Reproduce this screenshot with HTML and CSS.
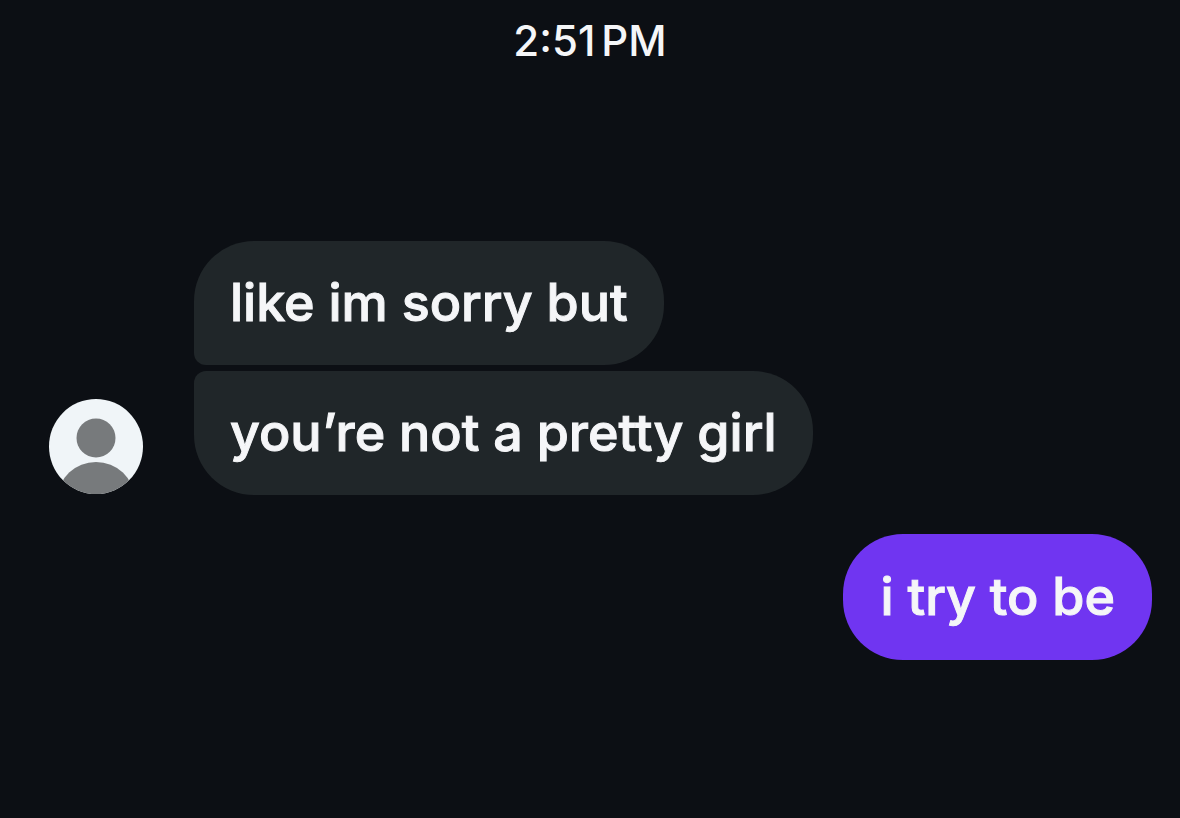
FILE: index.html
```html
<!DOCTYPE html>
<html lang="en">
<head>
  <meta charset="UTF-8" />
  <meta name="viewport" content="width=device-width, initial-scale=1" />
  <title>Chat</title>
  <link rel="stylesheet" href="styles.css">
</head>
<body>
  <main class="chat">
    <time class="timestamp" datetime="14:51"><span>2:51</span><span>PM</span></time>

    <div class="row incoming">
      <svg class="avatar" viewBox="0 0 94 96" role="img" aria-label="Profile picture">
        <defs>
          <clipPath id="avatar-clip"><ellipse cx="47" cy="47.5" rx="47" ry="47.5" /></clipPath>
        </defs>
        <g clip-path="url(#avatar-clip)">
          <rect width="94" height="96" fill="#f0f5f8" />
          <circle cx="47" cy="39" r="19.5" fill="#777a7c" />
          <ellipse cx="47" cy="99" rx="38" ry="36" fill="#777a7c" />
        </g>
      </svg>
      <div class="bubbles">
        <p class="bubble first">like im sorry but</p>
        <p class="bubble last">you’re not a pretty girl</p>
      </div>
    </div>

    <div class="row outgoing">
      <p class="bubble sent">i try to be</p>
    </div>
  </main>
</body>
</html>
```

FILE: styles.css
```css
body {
  margin: 0;
  background: #0c0f14;
  color: #f5f6f8;
  font-family: Inter, "Liberation Sans", sans-serif;
}

.chat {
  display: flex;
  flex-direction: column;
  padding: 16px 28px 48px;
}

.timestamp {
  display: flex;
  align-self: center;
  gap: 6px;
  margin-bottom: 175px;
  font-size: 42px;
  font-weight: 500;
  line-height: 50px;
}

.row {
  display: flex;
  align-items: flex-end;
}

.incoming {
  gap: 51px;
  padding-left: 21px;
}

.outgoing {
  justify-content: flex-end;
  margin-top: 39px;
}

.avatar {
  flex-shrink: 0;
  width: 94px;
  height: 96px;
}

.bubbles {
  display: flex;
  flex-direction: column;
  align-items: flex-start;
  gap: 6px;
}

.bubble {
  margin: 0;
  padding: 30px 36px;
  border-radius: 60px;
  background: #202629;
  font-size: 52px;
  font-weight: 500;
  line-height: 64px;
  -webkit-text-stroke: 1px currentColor;
}

.first {
  border-bottom-left-radius: 12px;
}

.last {
  border-top-left-radius: 12px;
}

.sent {
  padding: 31px 37px;
  background: #7035f1;
}
```
